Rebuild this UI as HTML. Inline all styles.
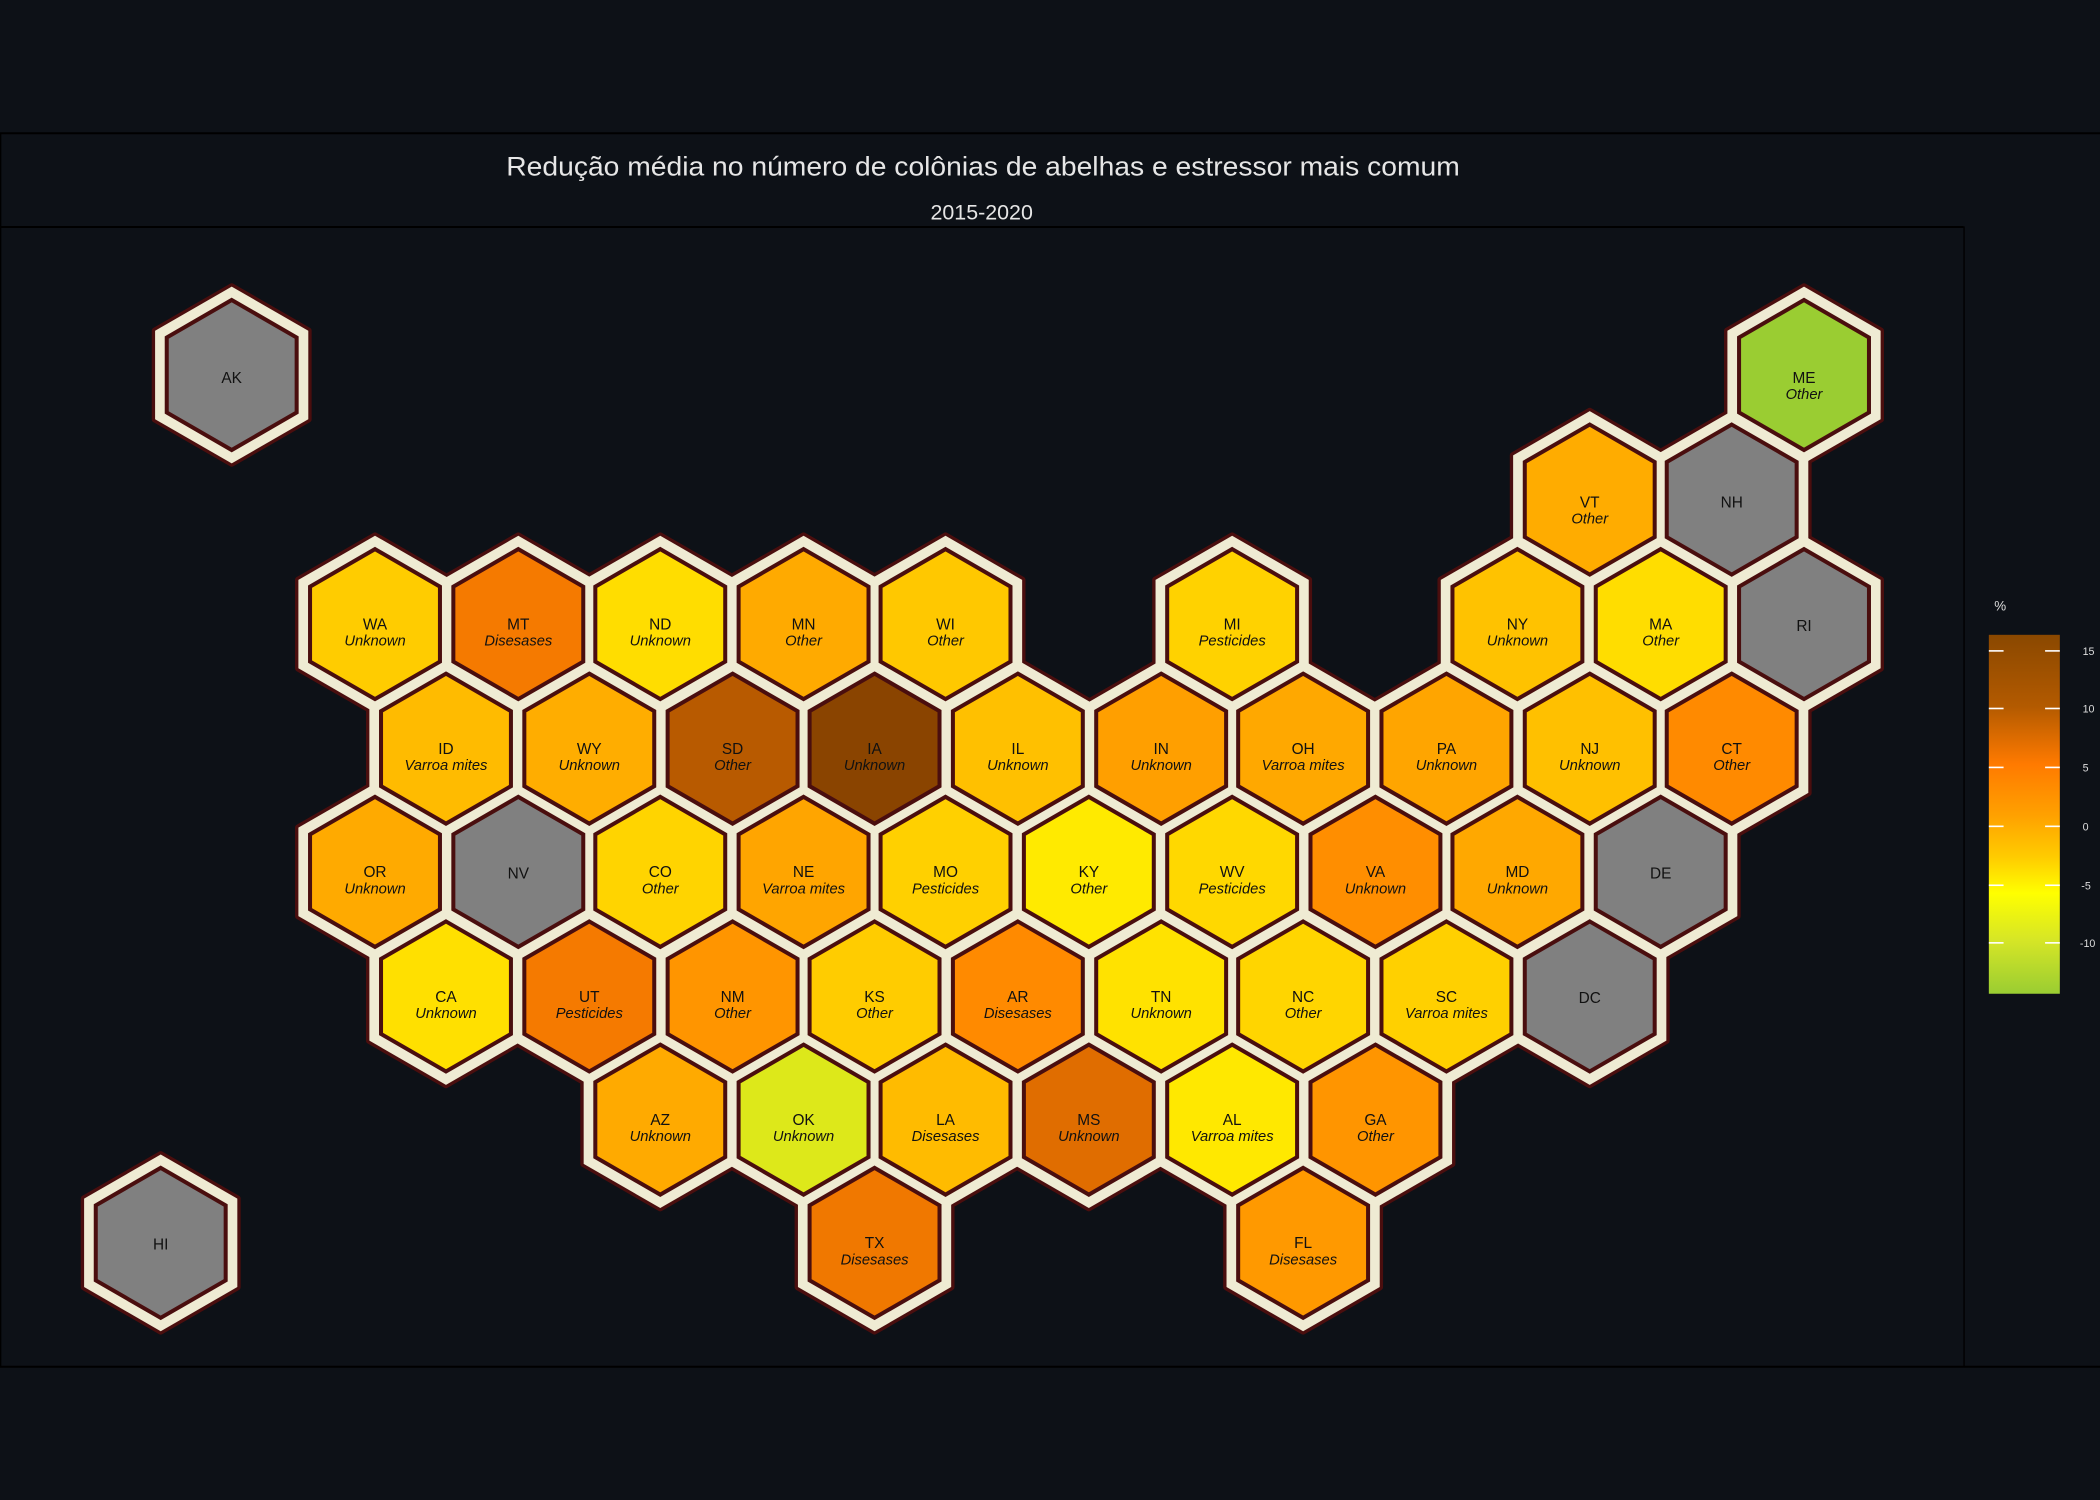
<!DOCTYPE html>
<html><head><meta charset="utf-8"><style>
html,body{margin:0;padding:0;background:#0d1117;}
svg{display:block}
.a{font-family:"Liberation Sans",sans-serif;font-size:11.5px;fill:#111;text-anchor:middle}
.c{font-family:"Liberation Sans",sans-serif;font-size:11px;font-style:italic;fill:#111;text-anchor:middle}
</style></head><body>
<svg width="2100" height="1500" viewBox="0 0 1568 1120" xmlns="http://www.w3.org/2000/svg">
<defs>
<polygon id="p" points="0,-66 57.2,-33 57.2,33 0,66 -57.2,33 -57.2,-33"/>
<polygon id="i" points="0,-56 48.5,-28 48.5,28 0,56 -48.5,28 -48.5,-28" stroke="#4a0e0e" stroke-width="3"/>
<g id="all">
<use href="#p" x="173" y="280"/><use href="#p" x="1347" y="280"/>
<use href="#p" x="1187" y="373"/><use href="#p" x="1293" y="373"/>
<use href="#p" x="280" y="466"/><use href="#p" x="387" y="466"/><use href="#p" x="493" y="466"/><use href="#p" x="600" y="466"/><use href="#p" x="706" y="466"/><use href="#p" x="920" y="466"/><use href="#p" x="1133" y="466"/><use href="#p" x="1240" y="466"/><use href="#p" x="1347" y="466"/>
<use href="#p" x="333" y="559"/><use href="#p" x="440" y="559"/><use href="#p" x="547" y="559"/><use href="#p" x="653" y="559"/><use href="#p" x="760" y="559"/><use href="#p" x="867" y="559"/><use href="#p" x="973" y="559"/><use href="#p" x="1080" y="559"/><use href="#p" x="1187" y="559"/><use href="#p" x="1293" y="559"/>
<use href="#p" x="280" y="651"/><use href="#p" x="387" y="651"/><use href="#p" x="493" y="651"/><use href="#p" x="600" y="651"/><use href="#p" x="706" y="651"/><use href="#p" x="813" y="651"/><use href="#p" x="920" y="651"/><use href="#p" x="1027" y="651"/><use href="#p" x="1133" y="651"/><use href="#p" x="1240" y="651"/>
<use href="#p" x="333" y="744"/><use href="#p" x="440" y="744"/><use href="#p" x="547" y="744"/><use href="#p" x="653" y="744"/><use href="#p" x="760" y="744"/><use href="#p" x="867" y="744"/><use href="#p" x="973" y="744"/><use href="#p" x="1080" y="744"/><use href="#p" x="1187" y="744"/>
<use href="#p" x="493" y="836"/><use href="#p" x="600" y="836"/><use href="#p" x="706" y="836"/><use href="#p" x="813" y="836"/><use href="#p" x="920" y="836"/><use href="#p" x="1027" y="836"/>
<use href="#p" x="120" y="928"/><use href="#p" x="653" y="928"/><use href="#p" x="973" y="928"/>
</g>
<linearGradient id="g" x1="0" y1="0" x2="0" y2="1">
<stop offset="0" stop-color="#8a4800"/><stop offset="0.2" stop-color="#b35a00"/><stop offset="0.36" stop-color="#ff7a00"/><stop offset="0.5" stop-color="#ffa000"/><stop offset="0.62" stop-color="#ffcc00"/><stop offset="0.72" stop-color="#ffff00"/><stop offset="0.85" stop-color="#d6e626"/><stop offset="1" stop-color="#9acd32"/>
</linearGradient>
</defs>
<rect width="1568" height="1120" fill="#0d1117"/>
<line x1="0" y1="99.5" x2="1568" y2="99.5" stroke="#000" stroke-width="1.5"/>
<line x1="0" y1="169.5" x2="1466" y2="169.5" stroke="#000" stroke-width="1.5"/>
<line x1="0" y1="1020.5" x2="1568" y2="1020.5" stroke="#000" stroke-width="1.5"/>
<line x1="1466.5" y1="169" x2="1466.5" y2="1020" stroke="#000" stroke-width="1"/>
<line x1="0.5" y1="99" x2="0.5" y2="1020" stroke="#000" stroke-width="1"/>
<text x="734" y="131" font-family="Liberation Sans,sans-serif" font-size="20" fill="#e6e6e6" text-anchor="middle" textLength="712" lengthAdjust="spacingAndGlyphs">Redução média no número de colônias de abelhas e estressor mais comum</text>
<text x="733" y="164" font-family="Liberation Sans,sans-serif" font-size="16" fill="#e6e6e6" text-anchor="middle">2015-2020</text>

<use href="#all" fill="#4a0e0e" stroke="#4a0e0e" stroke-width="5" stroke-linejoin="round"/>
<use href="#all" fill="#efebd3"/>
<g>
<use href="#i" x="173" y="280" fill="#808080"/><use href="#i" x="1347" y="280" fill="#9acd32"/>
<use href="#i" x="1187" y="373" fill="#ffac00"/><use href="#i" x="1293" y="373" fill="#808080"/>
<use href="#i" x="280" y="466" fill="#ffcc00"/><use href="#i" x="387" y="466" fill="#f57a00"/><use href="#i" x="493" y="466" fill="#ffdd00"/><use href="#i" x="600" y="466" fill="#ffaa00"/><use href="#i" x="706" y="466" fill="#ffc800"/><use href="#i" x="920" y="466" fill="#ffd200"/><use href="#i" x="1133" y="466" fill="#ffc200"/><use href="#i" x="1240" y="466" fill="#ffdd00"/><use href="#i" x="1347" y="466" fill="#808080"/>
<use href="#i" x="333" y="559" fill="#ffbb00"/><use href="#i" x="440" y="559" fill="#ffad00"/><use href="#i" x="547" y="559" fill="#b85a00"/><use href="#i" x="653" y="559" fill="#8a4400"/><use href="#i" x="760" y="559" fill="#ffc000"/><use href="#i" x="867" y="559" fill="#ff9f00"/><use href="#i" x="973" y="559" fill="#ffa800"/><use href="#i" x="1080" y="559" fill="#ffa500"/><use href="#i" x="1187" y="559" fill="#ffc000"/><use href="#i" x="1293" y="559" fill="#ff8a00"/>
<use href="#i" x="280" y="651" fill="#ffaa00"/><use href="#i" x="387" y="651" fill="#808080"/><use href="#i" x="493" y="651" fill="#ffd400"/><use href="#i" x="600" y="651" fill="#ffa500"/><use href="#i" x="706" y="651" fill="#ffd000"/><use href="#i" x="813" y="651" fill="#ffea00"/><use href="#i" x="920" y="651" fill="#ffd800"/><use href="#i" x="1027" y="651" fill="#ff8e00"/><use href="#i" x="1133" y="651" fill="#ffa800"/><use href="#i" x="1240" y="651" fill="#808080"/>
<use href="#i" x="333" y="744" fill="#ffe000"/><use href="#i" x="440" y="744" fill="#f57a00"/><use href="#i" x="547" y="744" fill="#ff9500"/><use href="#i" x="653" y="744" fill="#ffcc00"/><use href="#i" x="760" y="744" fill="#ff8a00"/><use href="#i" x="867" y="744" fill="#ffe200"/><use href="#i" x="973" y="744" fill="#ffd500"/><use href="#i" x="1080" y="744" fill="#ffd000"/><use href="#i" x="1187" y="744" fill="#808080"/>
<use href="#i" x="493" y="836" fill="#ffaa00"/><use href="#i" x="600" y="836" fill="#dde81a"/><use href="#i" x="706" y="836" fill="#ffbb00"/><use href="#i" x="813" y="836" fill="#e06d00"/><use href="#i" x="920" y="836" fill="#ffe800"/><use href="#i" x="1027" y="836" fill="#ff9500"/>
<use href="#i" x="120" y="928" fill="#808080"/><use href="#i" x="653" y="928" fill="#f07800"/><use href="#i" x="973" y="928" fill="#ff9900"/>
</g>
<g>
<text class="a" x="173" y="286">AK</text>
<text class="a" x="1347" y="286">ME</text><text class="c" x="1347" y="298">Other</text>
<text class="a" x="1187" y="379">VT</text><text class="c" x="1187" y="391">Other</text>
<text class="a" x="1293" y="379">NH</text>
<text class="a" x="280" y="470">WA</text><text class="c" x="280" y="482">Unknown</text>
<text class="a" x="387" y="470">MT</text><text class="c" x="387" y="482">Disesases</text>
<text class="a" x="493" y="470">ND</text><text class="c" x="493" y="482">Unknown</text>
<text class="a" x="600" y="470">MN</text><text class="c" x="600" y="482">Other</text>
<text class="a" x="706" y="470">WI</text><text class="c" x="706" y="482">Other</text>
<text class="a" x="920" y="470">MI</text><text class="c" x="920" y="482">Pesticides</text>
<text class="a" x="1133" y="470">NY</text><text class="c" x="1133" y="482">Unknown</text>
<text class="a" x="1240" y="470">MA</text><text class="c" x="1240" y="482">Other</text>
<text class="a" x="1347" y="471">RI</text>
<text class="a" x="333" y="563">ID</text><text class="c" x="333" y="575">Varroa mites</text>
<text class="a" x="440" y="563">WY</text><text class="c" x="440" y="575">Unknown</text>
<text class="a" x="547" y="563">SD</text><text class="c" x="547" y="575">Other</text>
<text class="a" x="653" y="563">IA</text><text class="c" x="653" y="575">Unknown</text>
<text class="a" x="760" y="563">IL</text><text class="c" x="760" y="575">Unknown</text>
<text class="a" x="867" y="563">IN</text><text class="c" x="867" y="575">Unknown</text>
<text class="a" x="973" y="563">OH</text><text class="c" x="973" y="575">Varroa mites</text>
<text class="a" x="1080" y="563">PA</text><text class="c" x="1080" y="575">Unknown</text>
<text class="a" x="1187" y="563">NJ</text><text class="c" x="1187" y="575">Unknown</text>
<text class="a" x="1293" y="563">CT</text><text class="c" x="1293" y="575">Other</text>
<text class="a" x="280" y="655">OR</text><text class="c" x="280" y="667">Unknown</text>
<text class="a" x="387" y="656">NV</text>
<text class="a" x="493" y="655">CO</text><text class="c" x="493" y="667">Other</text>
<text class="a" x="600" y="655">NE</text><text class="c" x="600" y="667">Varroa mites</text>
<text class="a" x="706" y="655">MO</text><text class="c" x="706" y="667">Pesticides</text>
<text class="a" x="813" y="655">KY</text><text class="c" x="813" y="667">Other</text>
<text class="a" x="920" y="655">WV</text><text class="c" x="920" y="667">Pesticides</text>
<text class="a" x="1027" y="655">VA</text><text class="c" x="1027" y="667">Unknown</text>
<text class="a" x="1133" y="655">MD</text><text class="c" x="1133" y="667">Unknown</text>
<text class="a" x="1240" y="656">DE</text>
<text class="a" x="333" y="748">CA</text><text class="c" x="333" y="760">Unknown</text>
<text class="a" x="440" y="748">UT</text><text class="c" x="440" y="760">Pesticides</text>
<text class="a" x="547" y="748">NM</text><text class="c" x="547" y="760">Other</text>
<text class="a" x="653" y="748">KS</text><text class="c" x="653" y="760">Other</text>
<text class="a" x="760" y="748">AR</text><text class="c" x="760" y="760">Disesases</text>
<text class="a" x="867" y="748">TN</text><text class="c" x="867" y="760">Unknown</text>
<text class="a" x="973" y="748">NC</text><text class="c" x="973" y="760">Other</text>
<text class="a" x="1080" y="748">SC</text><text class="c" x="1080" y="760">Varroa mites</text>
<text class="a" x="1187" y="749">DC</text>
<text class="a" x="493" y="840">AZ</text><text class="c" x="493" y="852">Unknown</text>
<text class="a" x="600" y="840">OK</text><text class="c" x="600" y="852">Unknown</text>
<text class="a" x="706" y="840">LA</text><text class="c" x="706" y="852">Disesases</text>
<text class="a" x="813" y="840">MS</text><text class="c" x="813" y="852">Unknown</text>
<text class="a" x="920" y="840">AL</text><text class="c" x="920" y="852">Varroa mites</text>
<text class="a" x="1027" y="840">GA</text><text class="c" x="1027" y="852">Other</text>
<text class="a" x="120" y="933">HI</text>
<text class="a" x="653" y="932">TX</text><text class="c" x="653" y="944">Disesases</text>
<text class="a" x="973" y="932">FL</text><text class="c" x="973" y="944">Disesases</text>
</g>

<text x="1489" y="456" font-family="Liberation Sans,sans-serif" font-size="10" fill="#ddd">%</text>
<rect x="1485" y="474" width="53" height="268" fill="url(#g)"/>
<g stroke="#fff" stroke-width="1.2">
<line x1="1485" y1="486" x2="1496" y2="486"/><line x1="1527" y1="486" x2="1538" y2="486"/>
<line x1="1485" y1="529" x2="1496" y2="529"/><line x1="1527" y1="529" x2="1538" y2="529"/>
<line x1="1485" y1="573" x2="1496" y2="573"/><line x1="1527" y1="573" x2="1538" y2="573"/>
<line x1="1485" y1="617" x2="1496" y2="617"/><line x1="1527" y1="617" x2="1538" y2="617"/>
<line x1="1485" y1="661" x2="1496" y2="661"/><line x1="1527" y1="661" x2="1538" y2="661"/>
<line x1="1485" y1="704" x2="1496" y2="704"/><line x1="1527" y1="704" x2="1538" y2="704"/>
</g>
<g font-family="Liberation Sans,sans-serif" font-size="8" fill="#ddd">
<text x="1555" y="489">15</text><text x="1555" y="532">10</text><text x="1555" y="576">5</text><text x="1555" y="620">0</text><text x="1554" y="664">-5</text><text x="1553" y="707">-10</text>
</g>
</svg>
</body></html>
